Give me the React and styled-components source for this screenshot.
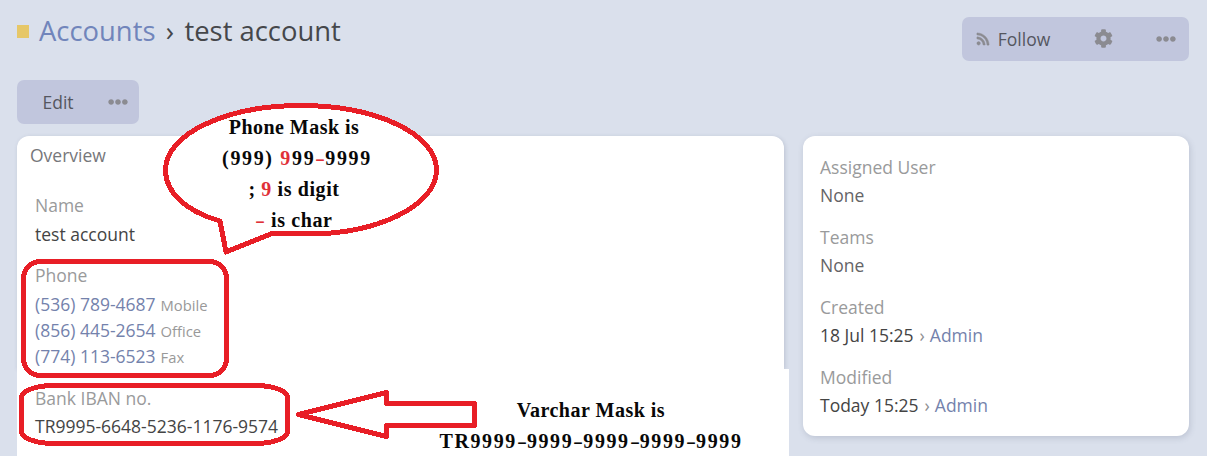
import React from "react";
import styled, { createGlobalStyle } from "styled-components";
import { FaRss, FaCog, FaEllipsisH } from "react-icons/fa";

const GlobalStyle = createGlobalStyle`
  * { box-sizing: border-box; }
  body { margin: 0; background: #dae0ec; overflow: hidden; }
`;

const Page = styled.div`
  position: relative;
  width: 1207px;
  height: 456px;
  overflow: hidden;
  padding: 0 18px 0 17px;
  background: #dae0ec;
  font-family: "Open Sans", sans-serif;
  font-size: 17.5px;
  line-height: 28px;
  color: #444;
  white-space: nowrap;
`;

const Header = styled.header`
  display: flex;
  justify-content: space-between;
  height: 80px;
  padding-top: 17px;
`;

const Title = styled.h1`
  display: flex;
  align-items: center;
  height: 28px;
  margin: 0;
  font-size: 27.4px;
  font-weight: 400;
  color: #45474b;
`;

const ColorMark = styled.span`
  width: 12px;
  height: 13px;
  margin: 0 10px 0 0;
  background: #e6c768;
`;

const TitleLink = styled.a`
  color: #7185bb;
`;

const Separator = styled.span`
  width: 29px;
  text-align: center;
`;

const ButtonGroup = styled.div`
  display: flex;
  align-items: center;
  width: ${(p) => p.$width};
  height: 44px;
  border-radius: 7px;
  background: #c1c6dd;
  color: #55565f;
`;

const Button = styled.button`
  display: flex;
  align-items: center;
  justify-content: center;
  width: ${(p) => p.$width};
  height: 44px;
  padding: ${(p) => p.$padding || "0"};
  border: 0;
  background: none;
  font: inherit;
  color: inherit;
  svg { color: #8b8b91; flex: none; }
`;

const FeedIcon = styled(FaRss)`
  stroke: currentColor;
  stroke-width: 14;
`;

const Follow = styled.span`
  margin-left: 8px;
`;

const Toolbar = styled.div`
  height: 56px;
`;

const Columns = styled.main`
  display: flex;
  align-items: flex-start;
`;

const Overview = styled.section`
  width: 767px;
  height: 233px;
  padding: 5px 13px;
  border-radius: 12px 12px 0 0;
  background: #fff;
  box-shadow: 1px 1px 4px rgba(70, 80, 110, 0.2);
`;

const MainColumn = styled.div`
  width: 772px;
  height: 320px;
  margin-right: 14px;
`;

const Extension = styled.div`
  position: relative;
  width: 772px;
  height: 87px;
  padding: 15px 18px;
  background: #fff;
`;

const PanelTitle = styled.h2`
  height: 28px;
  margin: 0 0 22px;
  font: inherit;
  color: #76777a;
`;

const Fields = styled.div`
  padding-left: 5px;
`;

const Field = styled.div`
  margin-bottom: ${(p) => p.$gap || "14px"};
`;

const Label = styled.div`
  height: 28px;
  color: #999a9b;
`;

const Value = styled.div`
  height: 28px;
  margin-top: ${(p) => p.$top || "0"};
  color: ${(p) => p.$color || "#444"};
`;

const PhoneList = styled.div`
  padding-top: 2px;
`;

const PhoneRow = styled.div`
  height: 26px;
  line-height: 26px;
  color: #7482ac;
`;

const PhoneType = styled.span`
  margin-left: 5px;
  font-size: 14.8px;
  color: #999;
`;

const SidePanel = styled.aside`
  width: 386px;
  height: 300px;
  padding: 17px;
  border-radius: 12px;
  background: #fff;
  box-shadow: 1px 2px 6px rgba(70, 80, 110, 0.2);
`;

const Chevron = styled.span`
  margin: 0 5px 0 6px;
  font-size: 17.5px;
  color: #8d8d91;
`;

const UserLink = styled.a`
  color: #7482ac;
`;

const Markup = styled.svg`
  position: absolute;
  inset: 0;
  fill: none;
  stroke: #e81e26;
  stroke-width: 5;
  stroke-linejoin: round;
  shape-rendering: crispEdges;
`;

const Note = styled.div`
  position: absolute;
  left: ${(p) => p.$left};
  top: ${(p) => p.$top};
  width: ${(p) => p.$width};
  text-align: center;
  font-family: "Liberation Serif", serif;
  font-size: 20px;
  font-weight: 700;
  line-height: 31px;
  color: #080808;
`;

const NoteLine = styled.div`
  letter-spacing: ${(p) => p.$spacing};
  padding-right: ${(p) => p.$inset || "0"};
`;

const Mark = styled.span`
  color: #df3038;
`;

const Dash = styled.span`
  display: inline-block;
  width: 10px;
  font-weight: 400;
  letter-spacing: 0;
  transform: scaleX(1.5);
  color: ${(p) => (p.$red ? "#df3038" : "inherit")};
`;

const phones = [
  ["(536) 789-4687", "Mobile"],
  ["(856) 445-2654", "Office"],
  ["(774) 113-6523", "Fax"],
];

const sideFields = [
  { label: "Assigned User", value: "None", color: "#646466" },
  { label: "Teams", value: "None", color: "#646466" },
  { label: "Created", value: "18 Jul 15:25", user: "Admin" },
  { label: "Modified", value: "Today 15:25", user: "Admin" },
];

export default function App() {
  return (
    <Page>
      <GlobalStyle />
      <Header>
        <Title>
          <ColorMark />
          <TitleLink>Accounts</TitleLink>
          <Separator>›</Separator>
          <span>test account</span>
        </Title>
        <ButtonGroup $width="227px">
          <Button $width="102px">
            <FeedIcon size={14} />
            <Follow>Follow</Follow>
          </Button>
          <Button $width="79px" $padding="0 0 2px">
            <FaCog size={19} />
          </Button>
          <Button $width="46px">
            <FaEllipsisH size={20} />
          </Button>
        </ButtonGroup>
      </Header>
      <Toolbar>
        <ButtonGroup $width="122px">
          <Button $width="82px">Edit</Button>
          <Button $width="38px">
            <FaEllipsisH size={20} />
          </Button>
        </ButtonGroup>
      </Toolbar>
      <Columns>
        <MainColumn>
          <Overview>
            <PanelTitle>Overview</PanelTitle>
            <Fields>
              <Field $gap="13px">
                <Label>Name</Label>
                <Value $top="1px">test account</Value>
              </Field>
              <Field>
                <Label>Phone</Label>
                <PhoneList>
                  {phones.map(([number, type]) => (
                    <PhoneRow key={type}>
                      {number}
                      <PhoneType>{type}</PhoneType>
                    </PhoneRow>
                  ))}
                </PhoneList>
              </Field>
            </Fields>
          </Overview>
          <Extension>
            <Label>Bank IBAN no.</Label>
            <Value>TR9995-6648-5236-1176-9574</Value>
          </Extension>
        </MainColumn>
        <SidePanel>
          {sideFields.map((f) => (
            <Field key={f.label}>
              <Label>{f.label}</Label>
              <Value $color={f.color}>
                {f.value}
                {f.user && (
                  <>
                    <Chevron>›</Chevron>
                    <UserLink>{f.user}</UserLink>
                  </>
                )}
              </Value>
            </Field>
          ))}
        </SidePanel>
      </Columns>

      <Markup width="1207" height="456" viewBox="0 0 1207 456">
        <path
          fill="#fff"
          d="M273 233 L226 252 L220 221 C185 211 165.5 192 165.5 170 C165.5 134 226 105.5 301 105.5 C376 105.5 436.5 134 436.5 170 C436.5 206 377 234 308 234 C290 234 282 233 273 233 Z"
        />
        <rect x="23.5" y="261.5" width="203" height="114" rx="17" />
        <rect x="21.5" y="385.5" width="266" height="58" rx="32" ry="12" />
        <path
          fill="#fff"
          d="M298.5 414.5 L386.5 392.5 L386.5 403.5 L474.5 403.5 L474.5 425.5 L386.5 425.5 L386.5 436.5 Z"
        />
      </Markup>
      <Note $left="194px" $top="112px" $width="206px">
        <NoteLine $spacing="0.45px" $inset="6px">Phone Mask is</NoteLine>
        <NoteLine $spacing="1.65px">
          (999) <Mark>9</Mark>99<Dash $red>-</Dash>9999
        </NoteLine>
        <NoteLine $spacing="0.6px" $inset="6px">
          ; <Mark>9</Mark> is digit
        </NoteLine>
        <NoteLine $spacing="0.6px" $inset="6px">
          <Dash $red>-</Dash> is char
        </NoteLine>
      </Note>
      <Note $left="438px" $top="395px" $width="306px">
        <NoteLine $spacing="0.5px">Varchar Mask is</NoteLine>
        <NoteLine $spacing="1.6px">
          TR9999<Dash>-</Dash>9999<Dash>-</Dash>9999<Dash>-</Dash>9999<Dash>-</Dash>9999
        </NoteLine>
      </Note>
    </Page>
  );
}
